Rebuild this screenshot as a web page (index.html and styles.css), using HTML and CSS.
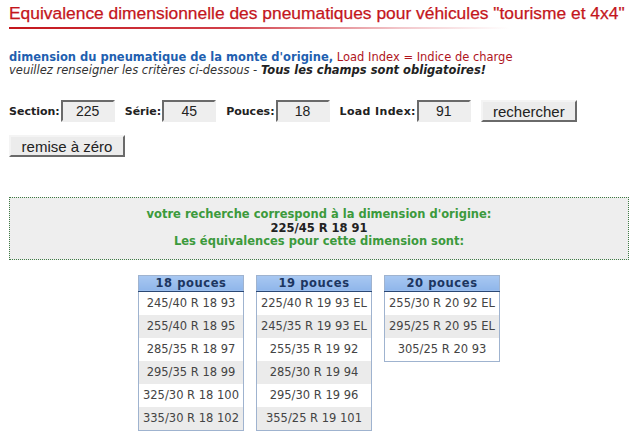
FILE: index.html
```html
<!DOCTYPE html>
<html lang="fr">
<head>
<meta charset="utf-8">
<title>Equivalence dimensionnelle des pneumatiques</title>
<link rel="stylesheet" href="styles.css">
</head>
<body>
<div class="page">
  <h1 class="title">Equivalence dimensionnelle des pneumatiques pour véhicules "tourisme et 4x4"</h1>
  <div class="title-rule"></div>

  <p class="intro">
    <span class="intro-main">dimension du pneumatique de la monte d'origine,</span>
    <span class="intro-note">Load Index = Indice de charge</span><br>
    <span class="intro-help">veuillez renseigner les critères ci-dessous - <b>Tous les champs sont obligatoires!</b></span>
  </p>

  <form class="search" onsubmit="return false">
    <div class="search-row">
      <label class="field"><span class="field-label">Section:</span><input class="field-input" type="text" value="225"></label>
      <label class="field"><span class="field-label">Série:</span><input class="field-input" type="text" value="45"></label>
      <label class="field"><span class="field-label">Pouces:</span><input class="field-input" type="text" value="18"></label>
      <label class="field"><span class="field-label field-label-wide">Load Index:</span><input class="field-input" type="text" value="91"></label>
      <button class="btn btn-search" type="submit">rechercher</button>
    </div>
    <div class="search-row">
      <button class="btn btn-reset" type="reset">remise à zéro</button>
    </div>
  </form>

  <div class="result">
    <div class="result-line">votre recherche correspond à la dimension d'origine:</div>
    <div class="result-dim">225/45 R 18 91</div>
    <div class="result-line">Les équivalences pour cette dimension sont:</div>
  </div>

  <div class="tables">
    <table class="equiv">
      <thead><tr><th>18 pouces</th></tr></thead>
      <tbody>
        <tr><td>245/40 R 18 93</td></tr>
        <tr><td>255/40 R 18 95</td></tr>
        <tr><td>285/35 R 18 97</td></tr>
        <tr><td>295/35 R 18 99</td></tr>
        <tr><td>325/30 R 18 100</td></tr>
        <tr><td>335/30 R 18 102</td></tr>
      </tbody>
    </table>
    <table class="equiv">
      <thead><tr><th>19 pouces</th></tr></thead>
      <tbody>
        <tr><td>225/40 R 19 93 EL</td></tr>
        <tr><td>245/35 R 19 93 EL</td></tr>
        <tr><td>255/35 R 19 92</td></tr>
        <tr><td>285/30 R 19 94</td></tr>
        <tr><td>295/30 R 19 96</td></tr>
        <tr><td>355/25 R 19 101</td></tr>
      </tbody>
    </table>
    <table class="equiv">
      <thead><tr><th>20 pouces</th></tr></thead>
      <tbody>
        <tr><td>255/30 R 20 92 EL</td></tr>
        <tr><td>295/25 R 20 95 EL</td></tr>
        <tr><td>305/25 R 20 93</td></tr>
      </tbody>
    </table>
  </div>
</div>
</body>
</html>
```
FILE: styles.css
```css
html, body {
  margin: 0;
  padding: 0;
  background: #ffffff;
}

.page {
  padding: 0 14px 0 9px;
  font-family: "DejaVu Sans", Verdana, sans-serif;
  font-size: 11.5px;
  color: #333333;
}

/* heading with its fading red rule */
.title {
  margin: 0;
  padding-top: 3px;
  font-family: "Liberation Sans", Arial, sans-serif;
  font-size: 17.4px;
  line-height: 20px;
  font-weight: normal;
  color: #c4161c;
  -webkit-text-stroke: 0.25px #c4161c;
  white-space: nowrap;
}

.title-rule {
  margin-top: 4px;
  width: 500px;
  height: 2px;
  background: linear-gradient(to right, #c4161c 0%, #d2404a 45%, #f2c6ca 78%, #ffffff 100%);
}

.intro {
  margin: 22px 0 0;
  line-height: 13px;
}

.intro-main {
  font-weight: bold;
  color: #1f5fb0;
}

.intro-note {
  color: #b0151d;
}

.intro-help {
  font-style: italic;
  color: #333333;
}

.intro-help b {
  color: #222222;
}

/* search form */
.search {
  margin-top: 23px;
}

.search-row {
  display: flex;
  align-items: center;
  height: 22px;
}

.search-row + .search-row {
  margin-top: 13px;
}

.field {
  display: flex;
  align-items: center;
  margin-right: 10px;
}

.field-label {
  font-weight: bold;
  font-size: 11px;
  color: #222222;
  margin-right: 1px;
}

.field-label-wide {
  letter-spacing: 0.35px;
}

.field-input {
  box-sizing: border-box;
  width: 54px;
  height: 22px;
  margin: 0;
  padding: 0;
  border: 2px solid;
  border-color: #6a6a6a #eeeeee #eeeeee #6a6a6a;
  background: #eeeeee;
  font-family: "Liberation Sans", Arial, sans-serif;
  font-size: 14px;
  color: #222222;
  text-align: center;
}

.btn {
  box-sizing: border-box;
  height: 22px;
  margin: 0;
  padding: 0;
  border: 2px solid;
  border-color: #f4f4f4 #6a6a6a #6a6a6a #f4f4f4;
  background: #ececec;
  font-family: "Liberation Sans", Arial, sans-serif;
  font-size: 15px;
  color: #222222;
}

.btn-search {
  width: 96px;
}

.btn-reset {
  width: 116px;
}

/* result notice */
.result {
  margin-top: 40px;
  padding: 10px 0;
  border: 1px dotted #3f7a44;
  background: #eeeeee;
  text-align: center;
  font-weight: bold;
  line-height: 13.5px;
}

.result-line {
  color: #3c9a3c;
}

.result-dim {
  color: #222222;
}

/* equivalence tables */
.tables {
  display: flex;
  justify-content: center;
  align-items: flex-start;
  gap: 12px;
  margin-top: 15px;
}

.equiv {
  border-collapse: collapse;
  border: 1px solid #9fb3cf;
}

.equiv th {
  height: 15px;
  padding: 0 4px;
  background: linear-gradient(to bottom, #a9c8f2, #8fb6ea);
  border-bottom: 1px solid #2b4874;
  color: #1c3560;
  font-weight: bold;
  font-size: 11.5px;
  line-height: 15px;
  letter-spacing: 0.6px;
}

.equiv td {
  height: 23px;
  padding: 0 4px;
  text-align: center;
  white-space: nowrap;
  color: #444444;
  font-size: 11.5px;
  line-height: 23px;
}

.equiv tbody tr:nth-child(even) td {
  background: #ebebeb;
}
```
